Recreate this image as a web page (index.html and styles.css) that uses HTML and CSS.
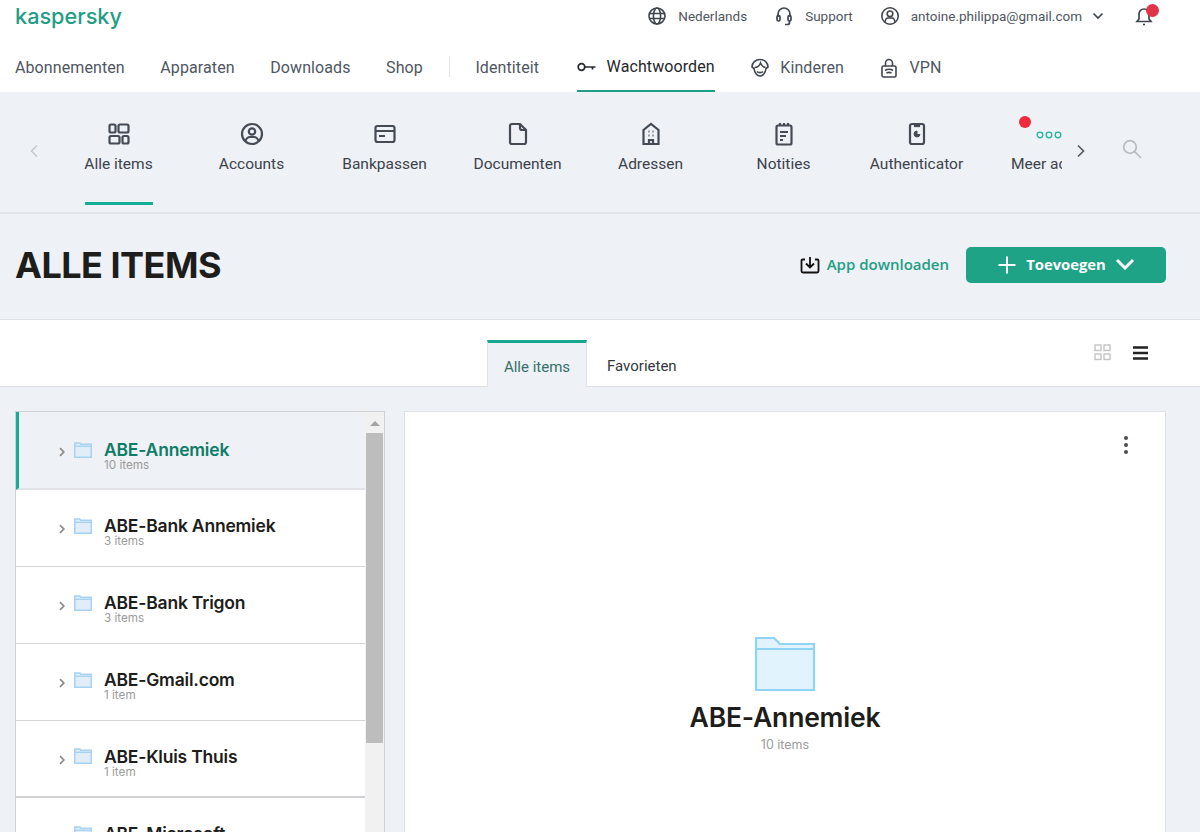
FILE: index.html
```html
<!DOCTYPE html>
<html lang="nl">
<head>
<meta charset="utf-8">
<title>Kaspersky - Alle items</title>
<link rel="stylesheet" href="styles.css">
</head>
<body>
<svg class="defs" width="0" height="0" aria-hidden="true">
  <symbol id="folder-s" viewBox="0 0 18 16"><path d="M.8 1h5l1 1.200h10.400v13H.800z" fill="#e1eefa" stroke="#a8d2f1" stroke-width="1.500"/><path d="M.8 4.300h16.400" stroke="#a8d2f1" stroke-width="1.400" fill="none"/></symbol>
  <symbol id="chev" viewBox="0 0 8 10"><path d="M2 1.200 5.800 5 2 8.800" fill="none" stroke="#8a8a8a" stroke-width="1.700"/></symbol>
</svg>
<header class="top">
  <div class="logo">kaspersky</div>
  <div class="top-right">
    <span class="top-item"><svg width="20" height="20" viewBox="0 0 20 20" fill="none" stroke="#3f4650" stroke-width="1.600"><circle cx="10" cy="10" r="8"/><ellipse cx="10" cy="10" rx="3.600" ry="8"/><path d="M2 7.500h16M2 12.500h16"/></svg>Nederlands</span>
    <span class="top-item"><svg width="20" height="20" viewBox="0 0 20 20" fill="none" stroke="#3f4650" stroke-width="1.700"><path d="M4 11V8a6 6 0 0 1 12 0v3"/><rect x="3" y="9.500" width="3" height="5.500" rx="1.400"/><rect x="14" y="9.500" width="3" height="5.500" rx="1.400"/><path d="M15.500 15v1.500a2 2 0 0 1-2 2H11"/></svg>Support</span>
    <span class="top-item"><svg width="20" height="20" viewBox="0 0 20 20" fill="none" stroke="#3f4650" stroke-width="1.600"><circle cx="10" cy="10" r="8.200"/><circle cx="10" cy="7.800" r="2.800"/><path d="M5 16c.4-2.800 2-4 3-4h4c1 0 2.600 1.200 3 4"/></svg>antoine.philippa@gmail.com<svg class="caret" width="12" height="8" viewBox="0 0 12 8" fill="none" stroke="#3f4650" stroke-width="1.700"><path d="M1.500 1.500 6 6l4.500-4.500"/></svg></span>
    <span class="bell"><svg width="20" height="22" viewBox="0 0 20 22" fill="none" stroke="#3f4650" stroke-width="1.700"><path d="M3 16.500h14l-2-2.500V9a5 5 0 0 0-10 0v5z"/><path d="M9 19.500h2"/></svg><i class="bell-dot"></i></span>
  </div>
</header>

<nav class="main-nav">
  <a class="nav-link">Abonnementen</a>
  <a class="nav-link">Apparaten</a>
  <a class="nav-link">Downloads</a>
  <a class="nav-link">Shop</a>
  <span class="nav-sep"></span>
  <a class="nav-link">Identiteit</a>
  <a class="nav-link active"><svg width="20" height="10" viewBox="0 0 20 10" fill="none" stroke="#23272c" stroke-width="1.700"><circle cx="4.500" cy="5" r="3.300"/><path d="M8 5h10.500M15.500 5v2.500"/></svg>Wachtwoorden</a>
  <a class="nav-link"><svg width="20" height="20" viewBox="0 0 20 20" fill="none" stroke="#3f4650" stroke-width="1.600"><path d="M10 1.500c4.500 0 8 3 8 7.500l-2 1.500c-.5 4-3 7.500-6 7.500s-5.500-3.500-6-7.500L2 9c0-4.500 3.500-7.500 8-7.500z"/><path d="M4.500 9.500c2.500 0 5-1.500 6-4.500 1 2.500 2.500 4 5 4.500M7 13.500c1.500 1.500 4.500 1.500 6 0"/></svg>Kinderen</a>
  <a class="nav-link"><svg width="20" height="22" viewBox="0 0 20 22" fill="none" stroke="#3f4650" stroke-width="1.600"><rect x="3" y="9" width="14" height="11" rx="1.500"/><path d="M6.500 9V6a3.500 3.500 0 0 1 7 0v3M6 13.500c2.500-1.500 5.500-1.500 8 0M7.500 16c1.500-.8 3.500-.8 5 0"/></svg>VPN</a>
</nav>

<section class="cat-bar">
  <span class="cat-arrow"><svg width="10" height="14" viewBox="0 0 10 14" fill="none" stroke="#c3c6cb" stroke-width="1.500"><path d="M8 1.500 2.500 7 8 12.500"/></svg></span>
  <div class="cat-track">
    <div class="cat active"><svg width="24" height="24" viewBox="0 0 24 24" fill="none" stroke="#444b55" stroke-width="2.200"><rect x="2.500" y="2.500" width="6" height="8" rx="1.500"/><rect x="11.500" y="2.500" width="10" height="8" rx="1.500"/><rect x="2.500" y="14" width="10" height="7.500" rx="1.500"/><rect x="15.500" y="14" width="6" height="7.500" rx="1.500"/></svg><span class="cat-label">Alle items</span></div>
    <div class="cat"><svg width="24" height="24" viewBox="0 0 24 24" fill="none" stroke="#444b55" stroke-width="2.200"><circle cx="12" cy="12" r="10"/><circle cx="12" cy="9.500" r="3.200"/><path d="M5.500 19c1-3 3-4 4.500-4h4c1.500 0 3.500 1 4.500 4"/></svg><span class="cat-label">Accounts</span></div>
    <div class="cat"><svg width="24" height="24" viewBox="0 0 24 24" fill="none" stroke="#444b55" stroke-width="2.200"><rect x="2.500" y="4" width="19" height="16" rx="2"/><path d="M2.500 9h19M6 14h6"/></svg><span class="cat-label">Bankpassen</span></div>
    <div class="cat"><svg width="24" height="24" viewBox="0 0 24 24" fill="none" stroke="#444b55" stroke-width="2.200"><path d="M6 2h8l6 6v12a2 2 0 0 1-2 2H6a2 2 0 0 1-2-2V4a2 2 0 0 1 2-2z"/><path d="M14 2v4a2 2 0 0 0 2 2h4"/></svg><span class="cat-label">Documenten</span></div>
    <div class="cat"><svg width="24" height="24" viewBox="0 0 24 24" fill="none" stroke="#444b55" stroke-width="2.200"><path d="M4.500 22V8L12 2l7.500 6v14z"/><path d="M10 22v-4h4v4"/><path d="M9.500 9.500h1M13.500 9.500h1M9.500 13.500h1M13.500 13.500h1"/></svg><span class="cat-label">Adressen</span></div>
    <div class="cat"><svg width="24" height="24" viewBox="0 0 24 24" fill="none" stroke="#444b55" stroke-width="2.200"><rect x="4.500" y="3.500" width="15" height="19" rx="1.500"/><path d="M8 1v3M12 1v3M16 1v3M8 10h8M8 14h6M8 18h3"/></svg><span class="cat-label">Notities</span></div>
    <div class="cat"><svg width="24" height="24" viewBox="0 0 24 24" fill="none" stroke="#444b55" stroke-width="2.200"><rect x="5" y="2" width="14" height="20" rx="2"/><path d="M10 2.500h4v1.500h-4z"/><path d="M12 9v3.500h3a3 3 0 1 1-3-3.500z" fill="#444b55" stroke-width="1"/></svg><span class="cat-label">Authenticator</span></div>
    <div class="cat more"><i class="more-dot"></i><svg width="28" height="24" viewBox="0 0 28 24" fill="none" stroke="#1eb39a" stroke-width="1.300"><circle cx="4" cy="13" r="2.800"/><circle cx="13" cy="13" r="2.800"/><circle cx="22" cy="13" r="2.800"/></svg><span class="cat-label">Meer acties</span></div>
  </div>
  <span class="cat-next"><svg width="10" height="14" viewBox="0 0 10 14" fill="none" stroke="#555b63" stroke-width="1.700"><path d="M2 1.500 7.500 7 2 12.500"/></svg></span>
  <span class="cat-search"><svg width="20" height="20" viewBox="0 0 20 20" fill="none" stroke="#b9bcc1" stroke-width="1.700"><circle cx="8" cy="8" r="6.300"/><path d="M12.500 12.500 19 19"/></svg></span>
</section>

<section class="title-row">
  <h1 class="title">ALLE ITEMS</h1>
  <div class="title-actions">
    <a class="app-link"><svg width="20" height="18" viewBox="0 0 20 18" fill="none" stroke="#111" stroke-width="1.800"><path d="M5 3.500H2.500a1 1 0 0 0-1 1V15a1.500 1.500 0 0 0 1.500 1.500h14a1.500 1.500 0 0 0 1.500-1.500V4.500a1 1 0 0 0-1-1H15"/><path d="M10 1v10M6 7.500l4 4 4-4"/></svg>App downloaden</a>
    <button class="add-btn"><svg class="add-plus" width="20" height="20" viewBox="0 0 20 20" stroke="#fff" stroke-width="2"><path d="M10 1.500v17M1.500 10h17"/></svg>Toevoegen<svg width="20" height="12" viewBox="0 0 20 12" fill="none" stroke="#fff" stroke-width="3"><path d="M2 2l8 8 8-8"/></svg></button>
  </div>
</section>

<section class="tabs-row">
  <div class="tabs">
    <span class="tab active">Alle items</span>
    <span class="tab">Favorieten</span>
  </div>
  <div class="views">
    <svg width="17" height="17" viewBox="0 0 17 17" fill="none" stroke="#c4c4c4" stroke-width="1.400"><rect x="1" y="1" width="6" height="5.500"/><rect x="10" y="1" width="6" height="5.500"/><rect x="1" y="10" width="6" height="5.500"/><rect x="10" y="10" width="6" height="5.500"/></svg>
    <svg width="15" height="14" viewBox="0 0 15 14" stroke="#222" stroke-width="2.600"><path d="M0 1.500h15M0 7h15M0 12.500h15"/></svg>
  </div>
</section>

<main class="content">
  <aside class="list-panel">
    <ul class="list">
      <li class="row selected"><svg class="chev" width="8" height="10"><use href="#chev"/></svg><svg class="fold" width="18" height="16"><use href="#folder-s"/></svg><div class="row-text"><div class="row-name">ABE-Annemiek</div><div class="row-count">10 items</div></div></li>
      <li class="row"><svg class="chev" width="8" height="10"><use href="#chev"/></svg><svg class="fold" width="18" height="16"><use href="#folder-s"/></svg><div class="row-text"><div class="row-name">ABE-Bank Annemiek</div><div class="row-count">3 items</div></div></li>
      <li class="row"><svg class="chev" width="8" height="10"><use href="#chev"/></svg><svg class="fold" width="18" height="16"><use href="#folder-s"/></svg><div class="row-text"><div class="row-name">ABE-Bank Trigon</div><div class="row-count">3 items</div></div></li>
      <li class="row"><svg class="chev" width="8" height="10"><use href="#chev"/></svg><svg class="fold" width="18" height="16"><use href="#folder-s"/></svg><div class="row-text"><div class="row-name">ABE-Gmail.com</div><div class="row-count">1 item</div></div></li>
      <li class="row"><svg class="chev" width="8" height="10"><use href="#chev"/></svg><svg class="fold" width="18" height="16"><use href="#folder-s"/></svg><div class="row-text"><div class="row-name">ABE-Kluis Thuis</div><div class="row-count">1 item</div></div></li>
      <li class="row"><svg class="chev" width="8" height="10"><use href="#chev"/></svg><svg class="fold" width="18" height="16"><use href="#folder-s"/></svg><div class="row-text"><div class="row-name">ABE-Microsoft</div><div class="row-count">&nbsp;</div></div></li>
    </ul>
    <div class="scrollbar"><i class="scroll-up"></i><div class="scroll-thumb"></div></div>
  </aside>
  <article class="detail">
    <div class="detail-menu"><i></i><i></i><i></i></div>
    <svg class="detail-folder" width="62" height="56" viewBox="0 0 62 56"><path d="M2 2h18l6 6h34v46H2z" fill="#e1f3fd" stroke="#8fd3f7" stroke-width="2.200"/><path d="M2 13h58" stroke="#8fd3f7" stroke-width="2.200" fill="none"/></svg>
    <h2 class="detail-name">ABE-Annemiek</h2>
    <div class="detail-count">10 items</div>
  </article>
</main>
</body>
</html>
```

FILE: styles.css
```css
* { box-sizing: border-box; }
html, body { height: 832px; overflow: hidden; }
body { margin: 0; background: #eef1f6; font-family: Roboto, "Liberation Sans", sans-serif; color: #23272c; }
.defs { position: absolute; }
svg { display: block; flex: none; }
a { color: inherit; text-decoration: none; }

.top { height: 40px; background: #fff; display: flex; justify-content: space-between; padding: 0 46px 0 15px; }
.logo { font-family: Inter, sans-serif; font-size: 21.700px; font-weight: 500; line-height: 32px; color: #1f9e85; }
.top-right { display: flex; align-items: center; height: 32px; }
.top-item { display: flex; align-items: center; gap: 11px; font-size: 13.500px; color: #4f565f; margin-right: 27px; }
.top-item .caret { margin-left: -1px; }
.top-item:nth-child(3) { margin-right: 25px; }
.bell { position: relative; margin-left: 5px; }
.bell-dot { position: absolute; right: -5px; top: -1px; width: 13px; height: 13px; border-radius: 50%; background: #e0344a; }

.main-nav { height: 52px; background: #fff; display: flex; padding-left: 15px; gap: 35.500px; }
.nav-link { display: flex; align-items: center; gap: 10px; font-size: 16px; letter-spacing: .1px; color: #4f565f; height: 52px; padding-top: 3px; }
.nav-link.active { color: #23272c; border-bottom: 2px solid #1f9e85; margin-left: 2px; }
.nav-sep { width: 1px; height: 20px; background: #e6e6e6; margin: 17px -10.500px 0 -9px; }

.cat-bar { height: 122px; display: flex; padding-left: 29px; border-bottom: 2px solid #e1e4e9; }
.cat-arrow { width: 23px; padding-top: 52px; }
.cat-track { width: 1010px; display: flex; overflow: hidden; }
.cat { position: relative; flex: 0 0 133px; display: flex; flex-direction: column; align-items: center; padding-top: 30px; }
.cat-label { font-size: 15.500px; color: #3c424b; margin-top: 9px; white-space: nowrap; line-height: 18px; }
.cat.active::after { content: ""; position: absolute; top: 110px; width: 68px; height: 3px; background: #13ad94; }
.more { align-items: flex-start; padding-left: 26px; }
.more svg { margin-left: 27px; }
.more .cat-label { margin-left: 2px; }
.more-dot { position: absolute; left: 36px; top: 24px; width: 12px; height: 12px; border-radius: 50%; background: #ee2a3c; }
.cat-next { padding: 52px 0 0 14px; }
.cat-search { padding: 47px 0 0 36px; }

.title-row { height: 106px; display: flex; justify-content: space-between; align-items: center; padding: 0 34px 4px 15px; border-bottom: 1px solid #dfe1e4; }
.title { margin: 0; font-family: Inter, sans-serif; font-size: 36px; font-weight: 700; color: #1d1d1b; letter-spacing: -.5px; }
.title-actions { display: flex; align-items: center; gap: 17px; }
.app-link { display: flex; align-items: center; gap: 7px; margin-top: -2px; font-family: "Open Sans", sans-serif; font-size: 15px; font-weight: 600; color: #1f9e85; }
.app-link svg { margin-top: 3px; }
.add-btn { width: 200px; height: 36px; border: 0; border-radius: 5px; background: #1fa386; color: #fff; font-family: "Open Sans", sans-serif; font-size: 14.800px; font-weight: 700; display: flex; align-items: center; justify-content: center; gap: 9px; padding: 0 0 2px; }
.add-plus { margin-top: 2px; }

.tabs-row { height: 67px; background: #fff; border-bottom: 1px solid #dfe1e4; position: relative; display: flex; justify-content: flex-end; padding-right: 52px; }
.tabs { position: absolute; left: 487px; top: 20px; display: flex; }
.tab { height: 47px; padding: 0 20px; font-size: 15px; line-height: 52px; color: #33383f; }
.tab.active { width: 100px; padding: 0; text-align: center; background: #eef1f6; border-top: 3px solid #17a78e; border-left: 1px solid #e0e2e6; border-right: 1px solid #e0e2e6; line-height: 48px; color: #33706a; }
.views { display: flex; align-items: center; gap: 22px; padding-bottom: 1px; }

.content { display: flex; gap: 19px; padding: 24px 34px 0 15px; }
.list-panel { width: 370px; height: 421px; display: flex; background: #fff; border: 1px solid #cfd1d4; border-bottom: 0; overflow: hidden; }
.list { list-style: none; margin: 0; padding: 0; flex: 1; min-width: 0; }
.row { height: 77px; display: flex; align-items: center; padding: 0 0 0 42px; border-bottom: 1px solid #d2d4d7; flex: none; }
.row:nth-child(5) { border-bottom: 2px solid #cfd1d4; }
.row.selected { height: 78px; background: #eef1f6; border-left: 3px solid #13ad94; padding-left: 39px; border-bottom: 2px solid #e1e3e7; }
.chev { margin-right: 8px; margin-top: 2px; }
.fold { margin: -5px 12px 0 0; }
.row-text { padding-top: 7px; }
.selected .chev { margin-top: 3px; }
.selected .fold { margin-top: 0; }
.selected .row-text { padding-top: 11px; }
.row-name { font-family: Inter, sans-serif; font-size: 17.500px; font-weight: 600; line-height: 20px; color: #1d1d1b; letter-spacing: -.2px; }
.selected .row-name { color: #0f7c68; }
.row-count { font-family: Inter, sans-serif; font-size: 11.700px; line-height: 11px; color: #9b9b9b; }
.scrollbar { width: 19px; background: #f1f1f1; display: flex; flex-direction: column; align-items: center; }
.scroll-up { width: 0; height: 0; margin-top: 9px; border: 5px solid transparent; border-top: 0; border-bottom: 5px solid #a3a3a3; }
.scroll-thumb { width: 17px; height: 310px; margin-top: 7px; background: #bdbdbd; }

.detail { position: relative; width: 762px; height: 421px; background: #fff; border: 1px solid #dfe1e4; border-bottom: 0; display: flex; flex-direction: column; align-items: center; padding-top: 224px; }
.detail-menu { position: absolute; right: 37px; top: 24px; display: flex; flex-direction: column; gap: 3px; }
.detail-menu i { width: 4px; height: 4px; border-radius: 50%; background: #4a4f56; }
.detail-name { margin: 9px 0 0; font-family: Inter, sans-serif; font-size: 26.500px; font-weight: 600; line-height: 32px; color: #1d1d1b; letter-spacing: -.2px; }
.detail-count { font-family: Inter, sans-serif; font-size: 12.500px; color: #9b9b9b; margin-top: 4px; }
```
